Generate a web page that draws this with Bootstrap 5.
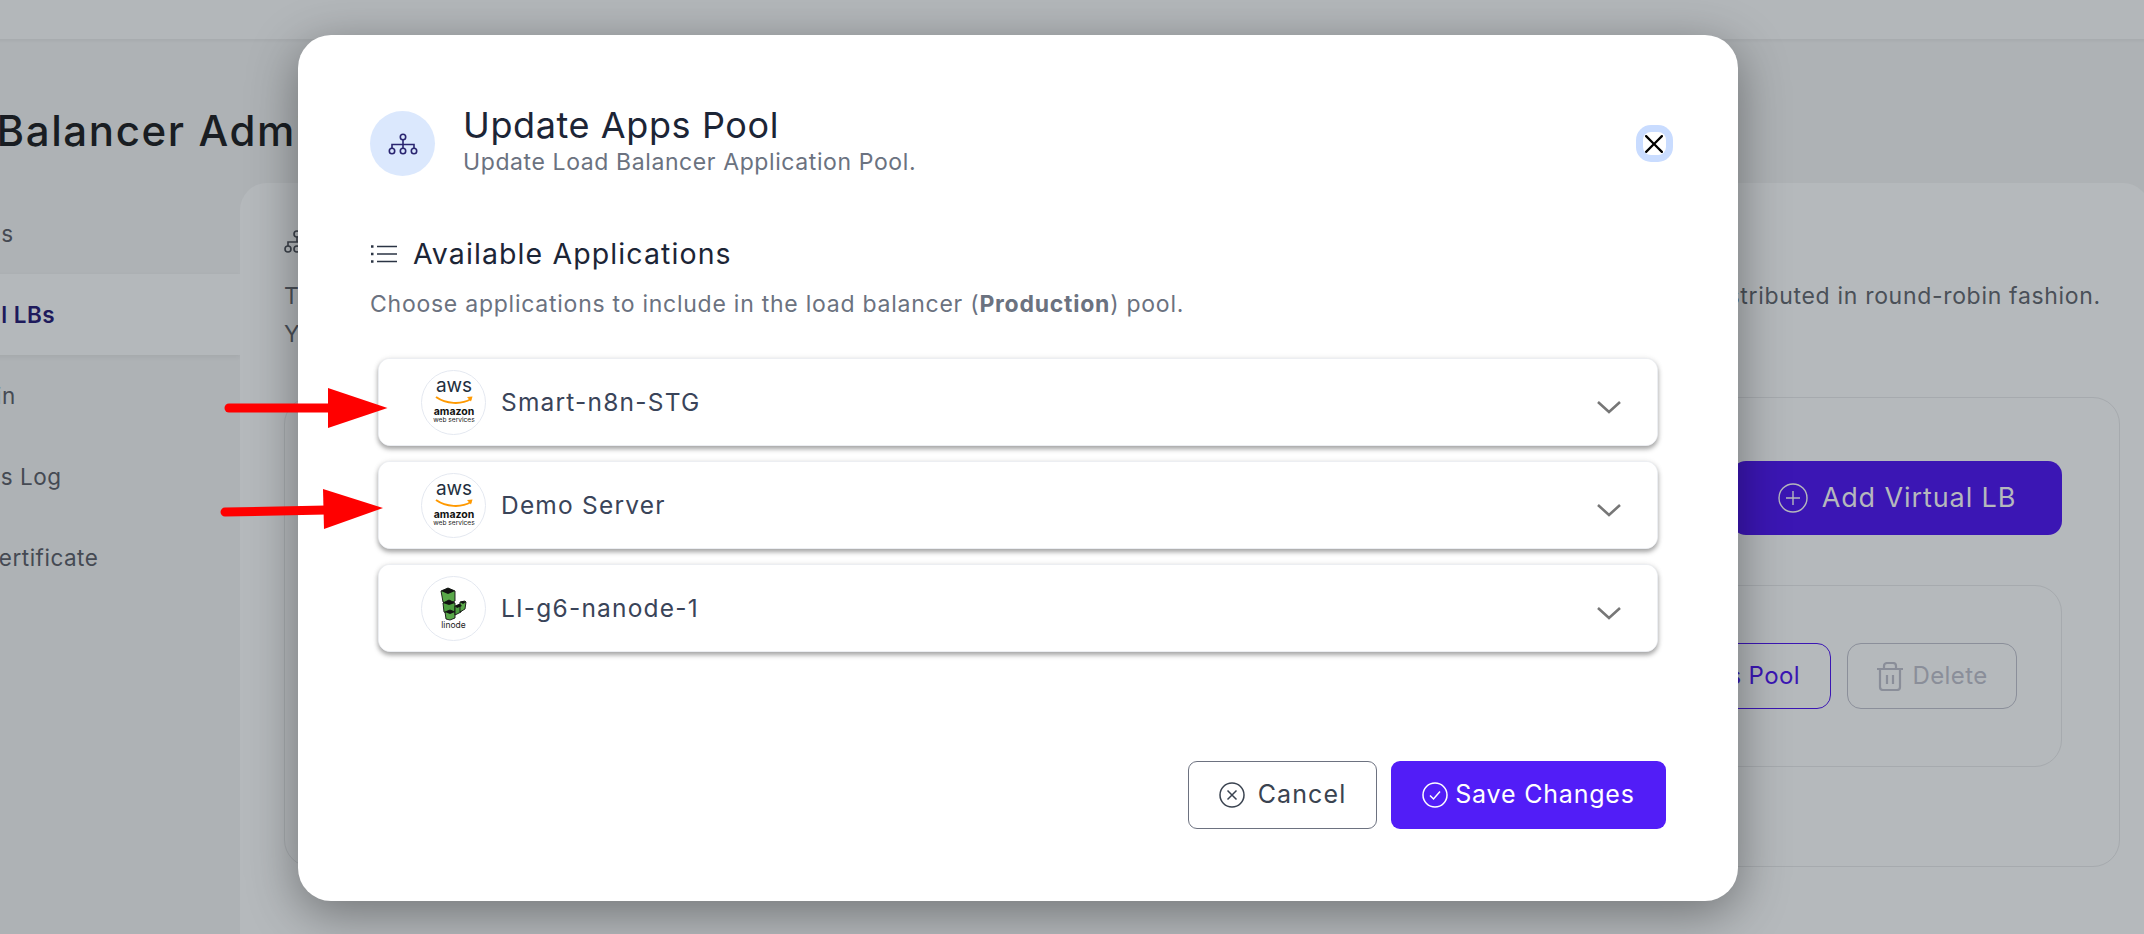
<!DOCTYPE html>
<html lang="en">
<head>
  <meta charset="UTF-8">
  <meta name="viewport" content="width=device-width, initial-scale=1">
  <title>Update Apps Pool</title>
  <link href="https://cdn.jsdelivr.net/npm/bootstrap@5.3.2/dist/css/bootstrap.min.css" rel="stylesheet">
  <style>
    html, body { height: 934px; overflow: hidden; }
    body { background: #aeb2b5; font-family: Inter, "Liberation Sans", sans-serif; color: #3f4650; }
    .page-wrap { margin-left: -160px; width: 2310px; height: 934px; overflow: hidden; }
    .top-strip { height: 39px; background: #b3b7ba; box-shadow: 0 1px 4px rgba(0,0,0,.06); }
    .page-title { font-size: 42px; font-weight: 500; color: #191d22; margin: 67px 0 0 -10px; line-height: 50px; letter-spacing: 1.6px; height: 77px; white-space: nowrap; }
    .side-col { width: 400px; flex: 0 0 400px; padding-top: 10px; }
    .side-item { height: 81px; padding-left: 92px; display: flex; align-items: center; font-size: 22.5px; letter-spacing: .5px; color: #454a53; }
    .side-item.on { background: #b4b8bb; font-weight: 600; color: #1e1a5c; box-shadow: 0 2px 5px rgba(0,0,0,.06); }
    .main-card { flex: 1; background: #b5b9bc; border-radius: 27px 27px 0 0; padding: 46px 30px 0 44px; height: 760px; }
    .main-head { height: 27px; margin-bottom: 21px; }
    .main-text { font-size: 23px; letter-spacing: .68px; line-height: 38px; color: #4a5058; white-space: nowrap; margin: 0; }
    .vlb-card { border: 1px solid #a6aaae; border-radius: 27px; height: 470px; margin-top: 44px; padding: 63px 57px 0 40px; }
    .add-btn { width: 330px; height: 74px; background: #3b16b4; border: 0; border-radius: 14px; color: #b5b8bc; font-size: 27px; letter-spacing: .9px; display: flex; align-items: center; justify-content: center; gap: 14px; }
    .lb-box { border: 1px solid #a6aaae; border-radius: 27px; height: 182px; margin-top: 50px; padding-right: 44px; }
    .pool-btn, .del-btn { height: 66px; background: transparent; border-radius: 14px; font-size: 24px; display: flex; align-items: center; justify-content: center; letter-spacing: .4px; }
    .pool-btn { width: 290px; border: 1px solid #3b16b4; color: #3b16b4; justify-content: flex-end; padding-right: 30px; white-space: nowrap; }
    .del-btn { width: 170px; border: 1px solid #8b8f9a; color: #8a8e99; gap: 8px; }

    .dlg-wrap { position: absolute; left: 298px; top: 35px; width: 1440px; height: 866px; }
    .dlg-wrap .modal-content { height: 100%; background: #fff; border: 0; border-radius: 33px; padding: 75px 72px 72px; box-shadow: 0 12px 50px rgba(0,0,0,.38); }
    .icon-disc { width: 65px; height: 65px; flex: 0 0 65px; border-radius: 50%; background: #dbe8fd; }
    .dlg-title { font-size: 36px; font-weight: 400; color: #1c2536; line-height: 36px; margin: -3px 0 0; letter-spacing: .6px; }
    .dlg-sub { font-size: 23px; color: #6b7280; line-height: 30px; margin: 4px 0 0; letter-spacing: .6px; }
    .dlg-wrap .btn-close { font-size: 15.5px; opacity: 1; background-size: 18px; box-shadow: 0 0 0 7px #c9dcff; border-radius: 8px; }
    .apps-head { font-size: 28.5px; color: #1c2536; line-height: 34px; margin: 60px 0 0; letter-spacing: 1.1px; gap: 16px; }
    .apps-desc { font-size: 23px; color: #6b7280; line-height: 34px; margin: 16px 0 0; letter-spacing: .75px; }
    .apps-desc strong { font-weight: 700; }
    .app-list { margin: 37px 8px 0; display: flex; flex-direction: column; gap: 15px; }
    .app-list .accordion-item { border: 1px solid #eceef2; border-radius: 12px !important; height: 88px; box-shadow: 0 3px 5px rgba(0,0,0,.35), 0 0 6px rgba(0,0,0,.06); overflow: hidden; }
    .app-list .accordion-button { height: 100%; padding: 0 35px 0 42px; gap: 15px; font-size: 24.5px; color: #3a4459; background: #fff; box-shadow: none; letter-spacing: 1.2px; }
    .app-list .accordion-button::after { display: none; }
    .logo-disc { width: 65px; height: 65px; flex: 0 0 65px; }
    .chev { margin-top: 10px; }
    .foot-row { margin-top: auto; gap: 14px; }
    .cancel-btn, .save-btn { height: 68px; border-radius: 9px; font-size: 25px; display: flex; align-items: center; justify-content: center; padding: 0; }
    .cancel-btn { width: 189px; border: 1px solid #6d7280; color: #3a4350; background: #fff; gap: 13px; letter-spacing: 1.1px; }
    .save-btn { width: 275px; border: 0; color: #fff; background: #521df7; gap: 7px; letter-spacing: .8px; }
    .note-arrows { position: absolute; left: 0; top: 0; pointer-events: none; }
  </style>
</head>
<body>
  <div class="page-wrap">
    <div class="top-strip"></div>
    <div class="page-title ps-5">Load Balancer Admin</div>
    <div class="d-flex">
      <div class="side-col">
        <div class="side-item">Ingress</div>
        <div class="side-item on">Virtual LBs</div>
        <div class="side-item">Domain</div>
        <div class="side-item">Access Log</div>
        <div class="side-item">SSL Certificate</div>
      </div>
      <div class="main-card">
        <div class="main-head">
          <svg width="26" height="25" viewBox="0 0 26 25" fill="none" stroke="#3c424b" stroke-width="1.6"><circle cx="4" cy="19" r="3"/><circle cx="13" cy="19" r="3"/><circle cx="22" cy="19" r="3"/><circle cx="13" cy="4" r="3"/><path d="M13 7v5M4 16v-4h18v4"/></svg>
        </div>
        <p class="main-text">The virtual load balancer receives incoming requests and forwards them to the applications in its pool, with all traffic being distributed in round-robin fashion.</p>
        <p class="main-text">You can add more than one virtual load balancer.</p>
        <div class="vlb-card">
          <div class="d-flex justify-content-end">
            <button class="add-btn">
              <svg width="30" height="30" viewBox="0 0 30 30" fill="none" stroke="#b5b8bc" stroke-width="1.4"><circle cx="15" cy="15" r="14"/><path d="M15 8v14M8 15h14"/></svg>
              Add Virtual LB
            </button>
          </div>
          <div class="lb-box d-flex align-items-center justify-content-end gap-3">
            <button class="pool-btn">Update Apps Pool</button>
            <button class="del-btn">
              <svg width="28" height="29" viewBox="0 0 28 29" fill="none" stroke="#8a8e99" stroke-width="2.2" stroke-linejoin="round"><path d="M1 7h26M4 7v18a3 3 0 0 0 3 3h14a3 3 0 0 0 3-3V7M8 7V4a3 3 0 0 1 3-3h6a3 3 0 0 1 3 3v3M11 13v9M17 13v9"/></svg>
              Delete
            </button>
          </div>
        </div>
      </div>
    </div>
  </div>

  <div class="dlg-wrap">
    <div class="modal-content">
      <div class="d-flex align-items-center">
        <div class="icon-disc d-flex align-items-center justify-content-center">
          <svg width="30" height="24" viewBox="0 0 30 24" fill="none" stroke="#2a2570" stroke-width="1.6"><circle cx="15" cy="5" r="2.7"/><circle cx="4" cy="19" r="2.7"/><circle cx="15" cy="19" r="2.7"/><circle cx="26" cy="19" r="2.7"/><path d="M15 8v8M4 16v-3.500h22V16"/></svg>
        </div>
        <div class="ms-4 ps-1 flex-grow-1">
          <h5 class="dlg-title">Update Apps Pool</h5>
          <p class="dlg-sub">Update Load Balancer Application Pool.</p>
        </div>
        <button class="btn-close" aria-label="Close"></button>
      </div>

      <div class="apps-head d-flex align-items-center">
        <svg width="27" height="20" viewBox="0 0 27 20" fill="none" stroke="#2b3444" stroke-width="1.7"><path d="M7 2.500h20M7 10h20M7 17.500h20"/><path d="M1 2.500h2.500M1 10h2.500M1 17.500h2.500" stroke-width="2.600"/></svg>
        Available Applications
      </div>
      <p class="apps-desc">Choose applications to include in the load balancer (<strong>Production</strong>) pool.</p>

      <div class="accordion app-list">
        <div class="accordion-item">
          <button class="accordion-button collapsed d-flex align-items-center">
            <svg class="logo-disc" viewBox="0 0 65 65">
              <circle cx="32.500" cy="32.500" r="32" fill="#fff" stroke="#e4e8f0"/>
              <text x="33" y="22" font-family="Inter, sans-serif" font-size="19" letter-spacing="0" fill="#232f3e" text-anchor="middle">aws</text>
              <path d="M15 27c10 7 25 8 35 2" fill="none" stroke="#f90" stroke-width="2"/><path d="M46 27l5.500-.5-1.500 5z" fill="#f90"/>
              <text x="33" y="45" font-family="Inter, sans-serif" font-size="10.500" font-weight="700" letter-spacing="0" fill="#111" text-anchor="middle">amazon</text>
              <text x="33" y="51.500" font-family="Inter, sans-serif" font-size="6.600" letter-spacing="0" fill="#222" text-anchor="middle">web services</text>
            </svg>
            <span class="flex-grow-1 text-start">Smart-n8n-STG</span>
            <svg class="chev" width="26" height="14" viewBox="0 0 26 14" fill="none" stroke="#777" stroke-width="2.600"><path d="M2 2l11 10L24 2"/></svg>
          </button>
        </div>
        <div class="accordion-item">
          <button class="accordion-button collapsed d-flex align-items-center">
            <svg class="logo-disc" viewBox="0 0 65 65">
              <circle cx="32.500" cy="32.500" r="32" fill="#fff" stroke="#e4e8f0"/>
              <text x="33" y="22" font-family="Inter, sans-serif" font-size="19" letter-spacing="0" fill="#232f3e" text-anchor="middle">aws</text>
              <path d="M15 27c10 7 25 8 35 2" fill="none" stroke="#f90" stroke-width="2"/><path d="M46 27l5.500-.5-1.500 5z" fill="#f90"/>
              <text x="33" y="45" font-family="Inter, sans-serif" font-size="10.500" font-weight="700" letter-spacing="0" fill="#111" text-anchor="middle">amazon</text>
              <text x="33" y="51.500" font-family="Inter, sans-serif" font-size="6.600" letter-spacing="0" fill="#222" text-anchor="middle">web services</text>
            </svg>
            <span class="flex-grow-1 text-start">Demo Server</span>
            <svg class="chev" width="26" height="14" viewBox="0 0 26 14" fill="none" stroke="#777" stroke-width="2.600"><path d="M2 2l11 10L24 2"/></svg>
          </button>
        </div>
        <div class="accordion-item">
          <button class="accordion-button collapsed d-flex align-items-center">
            <svg class="logo-disc" viewBox="0 0 65 65">
              <circle cx="32.500" cy="32.500" r="32" fill="#fff" stroke="#e4e8f0"/>
              <g stroke="#111" stroke-width=".9">
                <path d="M20 15l7-3 7 3v10l-7 3-5-2z" fill="#5aa84a"/>
                <path d="M22 27l6-3 6 3v8l-6 3-5-2z" fill="#4f9f42"/>
                <path d="M24 36l5-2 5 2v6l-5 2-4-1z" fill="#5aa84a"/>
                <path d="M34 30l5-2 1 1v7l-6 3z" fill="#4f9f42"/>
                <path d="M39 26l5-1 1 1-1 7-5 3z" fill="#5aa84a"/>
              </g>
              <path d="M20 15l7-3 7 3-7 3z" fill="#111"/><path d="M22 27l6-3 6 3-6 2z" fill="#111"/><path d="M24 36l5-2 5 2-5 2z" fill="#111"/><path d="M34 30l5-2 2 2-5 2z" fill="#111"/><path d="M39 26l3-1 3 1-3 2z" fill="#111"/>
              <text x="32.500" y="52" font-family="Inter, sans-serif" font-size="8.500" letter-spacing="0" fill="#222" text-anchor="middle">linode</text>
            </svg>
            <span class="flex-grow-1 text-start">LI-g6-nanode-1</span>
            <svg class="chev" width="26" height="14" viewBox="0 0 26 14" fill="none" stroke="#777" stroke-width="2.600"><path d="M2 2l11 10L24 2"/></svg>
          </button>
        </div>
      </div>

      <div class="foot-row d-flex justify-content-end">
        <button class="cancel-btn">
          <svg width="26" height="26" viewBox="0 0 26 26" fill="none" stroke="#3a4350" stroke-width="1.5"><circle cx="13" cy="13" r="12"/><path d="M8.500 8.500l9 9M17.500 8.500l-9 9"/></svg>
          Cancel
        </button>
        <button class="save-btn">
          <svg width="26" height="26" viewBox="0 0 26 26" fill="none" stroke="#fff" stroke-width="1.5"><circle cx="13" cy="13" r="12"/><path d="M8 13.500l3.500 3.500 6.500-7.500"/></svg>
          Save Changes
        </button>
      </div>
    </div>
  </div>

  <svg class="note-arrows" width="400" height="560" viewBox="0 0 400 560" fill="#ff0000">
    <path d="M229 408H330" stroke="#ff0000" stroke-width="9" stroke-linecap="round"/>
    <path d="M328 388L387.500 408L328 428z"/>
    <path d="M225 512L326 510" stroke="#ff0000" stroke-width="9" stroke-linecap="round"/>
    <path d="M323 489L383 508L324 529z"/>
  </svg>
</body>
</html>
